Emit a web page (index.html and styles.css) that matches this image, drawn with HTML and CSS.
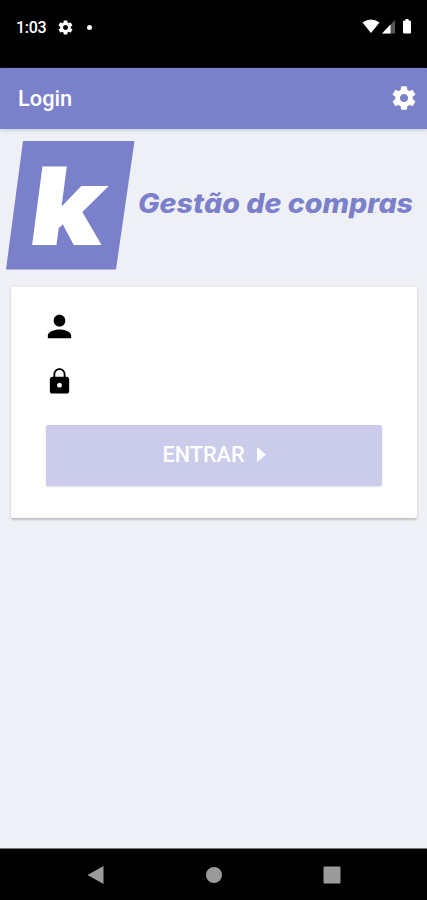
FILE: index.html
```html
<!DOCTYPE html>
<html lang="pt">
<head>
<meta charset="utf-8">
<title>Login</title>
<link rel="stylesheet" href="styles.css">
</head>
<body>
<svg width="0" height="0" class="defs"><defs>
<path id="gear" d="M19.43 12.98c.04-.32.07-.64.07-.98s-.03-.66-.07-.98l2.11-1.65c.19-.15.24-.42.12-.64l-2-3.46c-.12-.22-.39-.3-.61-.22l-2.49 1c-.52-.4-1.08-.73-1.69-.98l-.38-2.65C14.46 2.18 14.25 2 14 2h-4c-.25 0-.46.18-.49.42l-.38 2.65c-.61.25-1.17.59-1.69.98l-2.49-1c-.23-.09-.49 0-.61.22l-2 3.46c-.13.22-.07.49.12.64l2.11 1.65c-.04.32-.07.65-.07.98s.03.66.07.98l-2.11 1.65c-.19.15-.24.42-.12.64l2 3.46c.12.22.39.3.61.22l2.49-1c.52.4 1.08.73 1.69.98l.38 2.65c.03.24.24.42.49.42h4c.25 0 .46-.18.49-.42l.38-2.65c.61-.25 1.17-.59 1.69-.98l2.49 1c.23.09.49 0 .61-.22l2-3.46c.12-.22.07-.49-.12-.64l-2.11-1.65zM12 15.5c-1.93 0-3.5-1.57-3.5-3.5s1.57-3.5 3.5-3.5 3.5 1.57 3.5 3.5-1.57 3.5-3.5 3.5z"/>
</defs></svg>
<div class="status">
  <span class="time">1:03</span>
  <svg class="status-gear" viewBox="0 0 24 24"><use href="#gear"/></svg>
  <span class="dot"></span>
  <svg class="signals" viewBox="0 0 52 16">
    <path d="M.5 3.6Q9 -2.4 17.5 3.6L9 14z" fill="#fff"/>
    <path d="M33 1V14.500H20z" fill="#555"/>
    <path d="M28.500 5.600V14.500H20z" fill="#fff"/>
    <path d="M42 1.500h1.500V0h3v1.500H48q1 0 1 1V13.500q0 1-1 1h-6q-1 0-1-1V2.500q0-1 1-1z" fill="#fff"/>
  </svg>
</div>
<header class="toolbar">
  <h1>Login</h1>
  <svg class="settings" viewBox="0 0 24 24"><use href="#gear"/></svg>
</header>
<main>
  <div class="brand">
    <svg class="logo" viewBox="0 0 129 129">
      <path d="M17 0H128.500L110 128.500H0z" fill="#7b80ca"/>
      <text class="logo-k" transform="translate(20 103.500) skewX(-7.500)" textLength="75" lengthAdjust="spacingAndGlyphs">k</text>
    </svg>
    <svg class="brand-name" viewBox="0 0 280 40"><text x="0" y="27" textLength="275" lengthAdjust="spacingAndGlyphs">Gestão de compras</text></svg>
  </div>
  <section class="card">
    <div class="field"><svg class="person" viewBox="0 0 24 24"><path d="M12 12c2.210 0 4-1.790 4-4s-1.790-4-4-4-4 1.790-4 4 1.790 4 4 4zm0 2c-2.670 0-8 1.340-8 4v2h16v-2c0-2.660-5.330-4-8-4z"/></svg></div>
    <div class="field"><svg class="lock" viewBox="0 0 24 24"><path d="M18 8h-1V6c0-2.760-2.240-5-5-5S7 3.240 7 6v2H6c-1.100 0-2 .9-2 2v10c0 1.100.9 2 2 2h12c1.100 0 2-.9 2-2V10c0-1.100-.9-2-2-2zm-6 9c-1.100 0-2-.9-2-2s.9-2 2-2 2 .9 2 2-.9 2-2 2zm3.500-9H8.500V6c0-1.930 1.570-3.500 3.500-3.500s3.500 1.570 3.500 3.500v2z"/></svg></div>
    <button class="enter">ENTRAR<svg viewBox="0 0 9 15"><path d="M0 0L9 7.500 0 15z"/></svg></button>
  </section>
</main>
<nav class="navbar">
  <svg viewBox="0 0 20 20"><path d="M1.500 10L17.500 1V19z"/></svg>
  <svg viewBox="0 0 20 20"><circle cx="10" cy="10" r="8"/></svg>
  <svg viewBox="0 0 20 20"><rect x="1.500" y="1.500" width="17" height="17" rx="1"/></svg>
</nav>
</body>
</html>
```
FILE: styles.css
```css
* { box-sizing: border-box; }
body {
  margin: 0;
  height: 900px;
  display: flex;
  flex-direction: column;
  background: #eff0f5;
  font-family: Roboto, "Liberation Sans", sans-serif;
  overflow: hidden;
}
svg { display: block; flex: none; }
.defs { position: absolute; }
.status {
  height: 68px;
  flex: none;
  display: flex;
  align-items: center;
  padding: 0 13px 14px 16px;
  background: #000;
  color: #fff;
}
.time { width: 41px; font-size: 16px; font-weight: 500; letter-spacing: -0.3px; padding-top: 1px; }
.status-gear { width: 17px; height: 17px; fill: #fff; }
.dot { width: 5px; height: 5px; margin-left: 13px; border-radius: 50%; background: #fff; }
.signals { width: 52px; height: 16px; margin-left: auto; }
.toolbar {
  height: 61px;
  flex: none;
  display: flex;
  align-items: center;
  justify-content: space-between;
  padding: 0 9px 1px 18px;
  background: #7b80ca;
  color: #fff;
  box-shadow: 0 2px 3px #cbd5d8;
}
h1 { margin: 0; font-size: 21.8px; font-weight: 500; }
.settings { width: 28px; height: 28px; fill: #fff; }
main { flex: 1; padding: 12px 10px 0 11px; }
.brand { display: flex; align-items: center; height: 129px; margin-left: -5px; }
.logo { width: 129px; height: 129px; }
.logo-k { font: 900 108px Inter, sans-serif; fill: #fff; }
.brand-name { width: 280px; height: 40px; margin-left: 3px; font: italic 800 26.5px Inter, sans-serif; fill: #7b80ca; }
.card {
  width: 406px;
  height: 231px;
  margin-top: 17px;
  padding: 13px 35px 0;
  background: #fff;
  border-radius: 2px;
  box-shadow: 0 2px 2px #bfc3c5, 0 0 3px #dcdee2;
}
.field { height: 53px; display: flex; align-items: center; }
.person { width: 35px; height: 35px; margin-left: -4px; }
.lock { width: 29px; height: 29px; margin: 3px 0 0 -1px; }
.enter {
  width: 336px;
  height: 61px;
  margin: 19px 0 0;
  padding: 0 0 2px;
  display: flex;
  align-items: center;
  justify-content: center;
  gap: 12px;
  border: 0;
  border-radius: 2px;
  background: #cacce9;
  color: #fff;
  font: 500 21.7px Roboto, sans-serif;
  box-shadow: 0 1px 2px #dfe0ec;
}
.enter svg { width: 9px; height: 15px; fill: #fff; }
.navbar {
  height: 52px;
  flex: none;
  display: flex;
  align-items: center;
  justify-content: space-between;
  padding: 0 85px 0 86px;
  background: #000;
  border-top: 1px solid #777;
}
.navbar svg { width: 20px; height: 20px; fill: #9b9b9b; }
```
